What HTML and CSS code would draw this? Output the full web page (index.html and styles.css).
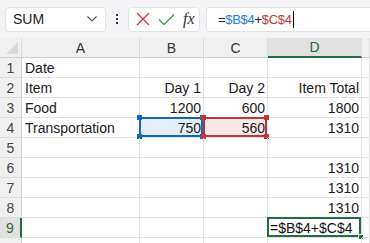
FILE: index.html
```html
<!DOCTYPE html>
<html lang="en">
<head>
    <meta charset="UTF-8">
    <title>Sheet</title>
    <link rel="stylesheet" href="styles.css">
</head>
<body>
    <div class="toolbar">
        <div class="namebox">
            <span>SUM</span>
            <svg width="12" height="8" viewBox="0 0 12 8"><path d="M1.5 1.5 L6 6 L10.5 1.5" fill="none" stroke="#555" stroke-width="1.2"/></svg>
        </div>
        <div class="dots"><i></i><i></i><i></i></div>
        <div class="fbtns">
            <svg width="14" height="14" viewBox="0 0 14 14"><path d="M1 1 L13 13 M13 1 L1 13" stroke="#e0353a" stroke-width="1.4"/></svg>
            <svg width="17" height="13" viewBox="0 0 17 13"><path d="M1 6.5 L6 11.5 L16 1.5" fill="none" stroke="#3aa356" stroke-width="1.4"/></svg>
            <span class="fx">fx</span>
        </div>
        <div class="formula">=<span class="ref-b">$B$4</span>+<span class="ref-c">$C$4</span><span class="caret"></span></div>
    </div>

    <div class="sheet">
        <div class="hd corner"><span class="tri"></span></div>
        <div class="hd">A</div>
        <div class="hd">B</div>
        <div class="hd">C</div>
        <div class="hd active">D</div>
        <div class="hd"></div>

        <div class="rh">1</div>
        <div class="c">Date</div><div class="c"></div><div class="c"></div><div class="c"></div><div class="c"></div>

        <div class="rh">2</div>
        <div class="c">Item</div><div class="c r">Day 1</div><div class="c r">Day 2</div><div class="c r">Item Total</div><div class="c"></div>

        <div class="rh">3</div>
        <div class="c">Food</div><div class="c r">1200</div><div class="c r">600</div><div class="c r">1800</div><div class="c"></div>

        <div class="rh">4</div>
        <div class="c">Transportation</div>
        <div class="c r sel-b">750<i class="h tl"></i><i class="h tr"></i><i class="h bl"></i><i class="h br"></i></div>
        <div class="c r sel-c">560<i class="h tl"></i><i class="h tr"></i><i class="h bl"></i><i class="h br"></i></div>
        <div class="c r">1310</div><div class="c"></div>

        <div class="rh">5</div>
        <div class="c"></div><div class="c"></div><div class="c"></div><div class="c"></div><div class="c"></div>

        <div class="rh">6</div>
        <div class="c"></div><div class="c"></div><div class="c"></div><div class="c r">1310</div><div class="c"></div>

        <div class="rh">7</div>
        <div class="c"></div><div class="c"></div><div class="c"></div><div class="c r">1310</div><div class="c"></div>

        <div class="rh">8</div>
        <div class="c"></div><div class="c"></div><div class="c"></div><div class="c r">1310</div><div class="c"></div>

        <div class="rh active">9</div>
        <div class="c"></div><div class="c"></div><div class="c"></div><div class="c edit">=$B$4+$C$4<i class="fill"></i></div><div class="c"></div>

        <div class="rh"></div>
        <div class="c"></div><div class="c"></div><div class="c"></div><div class="c"></div><div class="c"></div>
    </div>
</body>
</html>
```

FILE: styles.css
```css
*{
    margin: 0;
    padding: 0;
    box-sizing: border-box;
}
body{
    width: 370px;
    height: 243px;
    overflow: hidden;
    background: #fff;
    font-family: "Liberation Sans", Arial, sans-serif;
    color: #1b1b1b;
}

/* formula bar */
.toolbar{
    height: 38px;
    background: #f4f3f6;
    display: flex;
    align-items: center;
    padding: 0 0 0 5px;
}
.namebox{
    width: 101px;
    height: 25px;
    background: #fff;
    border: 1px solid #e3e2e6;
    border-radius: 4px;
    display: flex;
    align-items: center;
    justify-content: space-between;
    padding: 0 7px 0 7px;
    font-size: 14px;
    color: #222;
}
.dots{
    width: 22px;
    display: flex;
    flex-direction: column;
    align-items: center;
    gap: 2px;
}
.dots i{
    width: 2px;
    height: 2px;
    background: #333;
}
.fbtns{
    width: 72px;
    height: 25px;
    background: #fff;
    border: 1px solid #e3e2e6;
    border-radius: 4px;
    display: flex;
    align-items: center;
    gap: 8px;
    padding-left: 7px;
}
.fx{
    font-family: "Liberation Serif", "Times New Roman", serif;
    font-style: italic;
    font-size: 16px;
    color: #333;
}
.formula{
    flex: 1;
    height: 25px;
    margin-left: 6px;
    background: #fff;
    border: 1px solid #e3e2e6;
    border-right: 0;
    border-radius: 4px 0 0 4px;
    display: flex;
    align-items: center;
    padding-left: 11px;
    font-size: 13px;
    letter-spacing: -0.3px;
    color: #222;
}
.ref-b{ color: #1a7fd6; }
.ref-c{ color: #c8383c; }
.caret{
    width: 1px;
    height: 17px;
    background: #000;
    margin-left: 1px;
}

/* grid */
.sheet{
    display: grid;
    grid-template-columns: 22px 118px 64px 64px 94px 8px;
    grid-auto-rows: 20px;
    font-size: 14px;
}
.hd{
    background: #f0f0f0;
    border-right: 1px solid #dcdcdc;
    border-bottom: 1px solid #cfcfcf;
    display: flex;
    align-items: center;
    justify-content: center;
    color: #333;
    font-size: 14px;
}
.hd.active{
    background: #e1e1e1;
    color: #1e6e42;
    border-bottom: 2px solid #1e6e42;
}
.corner{
    position: relative;
}
.tri{
    position: absolute;
    right: 3px;
    bottom: 3px;
    width: 0;
    height: 0;
    border-left: 12px solid transparent;
    border-bottom: 12px solid #dadada;
}
.rh{
    background: #f0f0f0;
    border-right: 1px solid #cfcfcf;
    border-bottom: 1px solid #dcdcdc;
    display: flex;
    align-items: center;
    justify-content: center;
    color: #444;
}
.rh.active{
    background: #e1e1e1;
    color: #1e6e42;
    border-right: 2px solid #1e6e42;
}
.c{
    border-right: 1px solid #e1e1e1;
    border-bottom: 1px solid #e1e1e1;
    display: flex;
    align-items: center;
    padding: 1px 2px 0 3px;
    white-space: nowrap;
    position: relative;
}
.c.r{
    justify-content: flex-end;
}

/* reference highlights */
.sel-b{
    background: #e5eef8;
    box-shadow: inset 0 0 0 2px #1068b8;
    margin: -1px 0 0 -1px;
}
.sel-c{
    background: #f8e7e7;
    box-shadow: inset 0 0 0 2px #c1353a;
    margin: -1px 0 0 -1px;
}
.h{
    position: absolute;
    width: 5px;
    height: 5px;
}
.sel-b .h{ background: #1068b8; }
.sel-c .h{ background: #c1353a; }
.h.tl{ left: -2px; top: -2px; }
.h.tr{ right: -2px; top: -2px; }
.h.bl{ left: -2px; bottom: -2px; }
.h.br{ right: -2px; bottom: -2px; }

.edit{
    box-shadow: inset 0 0 0 2px #1e6e42;
    margin: -1px 0 0 -1px;
    padding-left: 3px;
    color: #111;
}
.fill{
    position: absolute;
    right: -3px;
    bottom: -3px;
    width: 6px;
    height: 6px;
    background: #1e6e42;
    border: 1px solid #fff;
}
```
